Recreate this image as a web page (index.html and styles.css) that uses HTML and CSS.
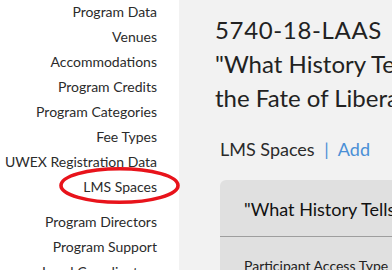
FILE: index.html
```
<!DOCTYPE html>
<html>
<head>
<meta charset="utf-8">
<link rel="stylesheet" href="styles.css">
</head>
<body>
<div class="page">
  <nav class="sidebar">
    <ul class="nav-list">
      <li>Program Data</li>
      <li>Venues</li>
      <li>Accommodations</li>
      <li>Program Credits</li>
      <li>Program Categories</li>
      <li>Fee Types</li>
      <li>UWEX Registration Data</li>
      <li class="active">LMS Spaces</li>
      <li class="group-start">Program Directors</li>
      <li>Program Support</li>
      <li>Local Coordinators</li>
    </ul>
  </nav>
  <main class="main">
    <h1 class="title"><span class="code">5740-18-LAAS</span><br>"What History Tells Us About<br>the Fate of Liberal Education"</h1>
    <div class="content">
      <div class="section-head">LMS Spaces <span class="sep">|</span> <a class="add">Add</a></div>
      <div class="card">
        <div class="card-head">"What History Tells Us About the Fate of Liberal Education"</div>
        <div class="card-body">Participant Access Type</div>
      </div>
    </div>
  </main>
</div>
<svg class="annot" width="392" height="270" viewBox="0 0 392 270">
  <ellipse cx="119.5" cy="185.5" rx="58.5" ry="16.8" fill="none" stroke="#e8131b" stroke-width="3.6"/>
</svg>
</body>
</html>
```
FILE: styles.css
```
html, body {
  margin: 0;
  padding: 0;
  width: 392px;
  height: 270px;
  overflow: hidden;
  font-family: Lato, "Open Sans", sans-serif;
  color: #2b2b2b;
}
.page {
  display: flex;
  width: 800px;
  height: 270px;
  background: #f2f2f2;
}
.sidebar {
  width: 179px;
  flex: none;
  background: #ffffff;
}
.nav-list {
  list-style: none;
  margin: -1px 0 0 0;
  padding: 0 22px 0 0;
  text-align: right;
  font-size: 14px;
  line-height: 25px;
  white-space: nowrap;
}
.nav-list .group-start {
  margin-top: 10px;
}
.main {
  flex: 1;
  padding-left: 36px;
}
.title {
  margin: 13px 0 0 0;
  font-size: 24px;
  font-weight: 400;
  line-height: 34px;
  white-space: nowrap;
  color: #222;
}
.code {
  letter-spacing: 0.65px;
}
.content {
  padding-left: 5px;
}
.section-head {
  margin-top: 23px;
  font-size: 18px;
  line-height: 22px;
  color: #2b2b2b;
}
.sep {
  color: #4a8fd6;
  margin: 0 5px;
}
.add {
  color: #4a8fd6;
}
.card {
  margin-top: 20px;
  width: 560px;
  background: #e0e0e0;
  border-radius: 6px 6px 0 0;
}
.card-head {
  padding: 18px 24px 16px;
  font-size: 18px;
  line-height: 22px;
  white-space: nowrap;
  color: #111;
  border-bottom: 1px solid #9e9e9e;
}
.card-body {
  padding: 20px 24px;
  font-size: 14px;
  line-height: 17px;
  color: #222;
}
.annot {
  position: absolute;
  left: 0;
  top: 0;
  pointer-events: none;
}
```
